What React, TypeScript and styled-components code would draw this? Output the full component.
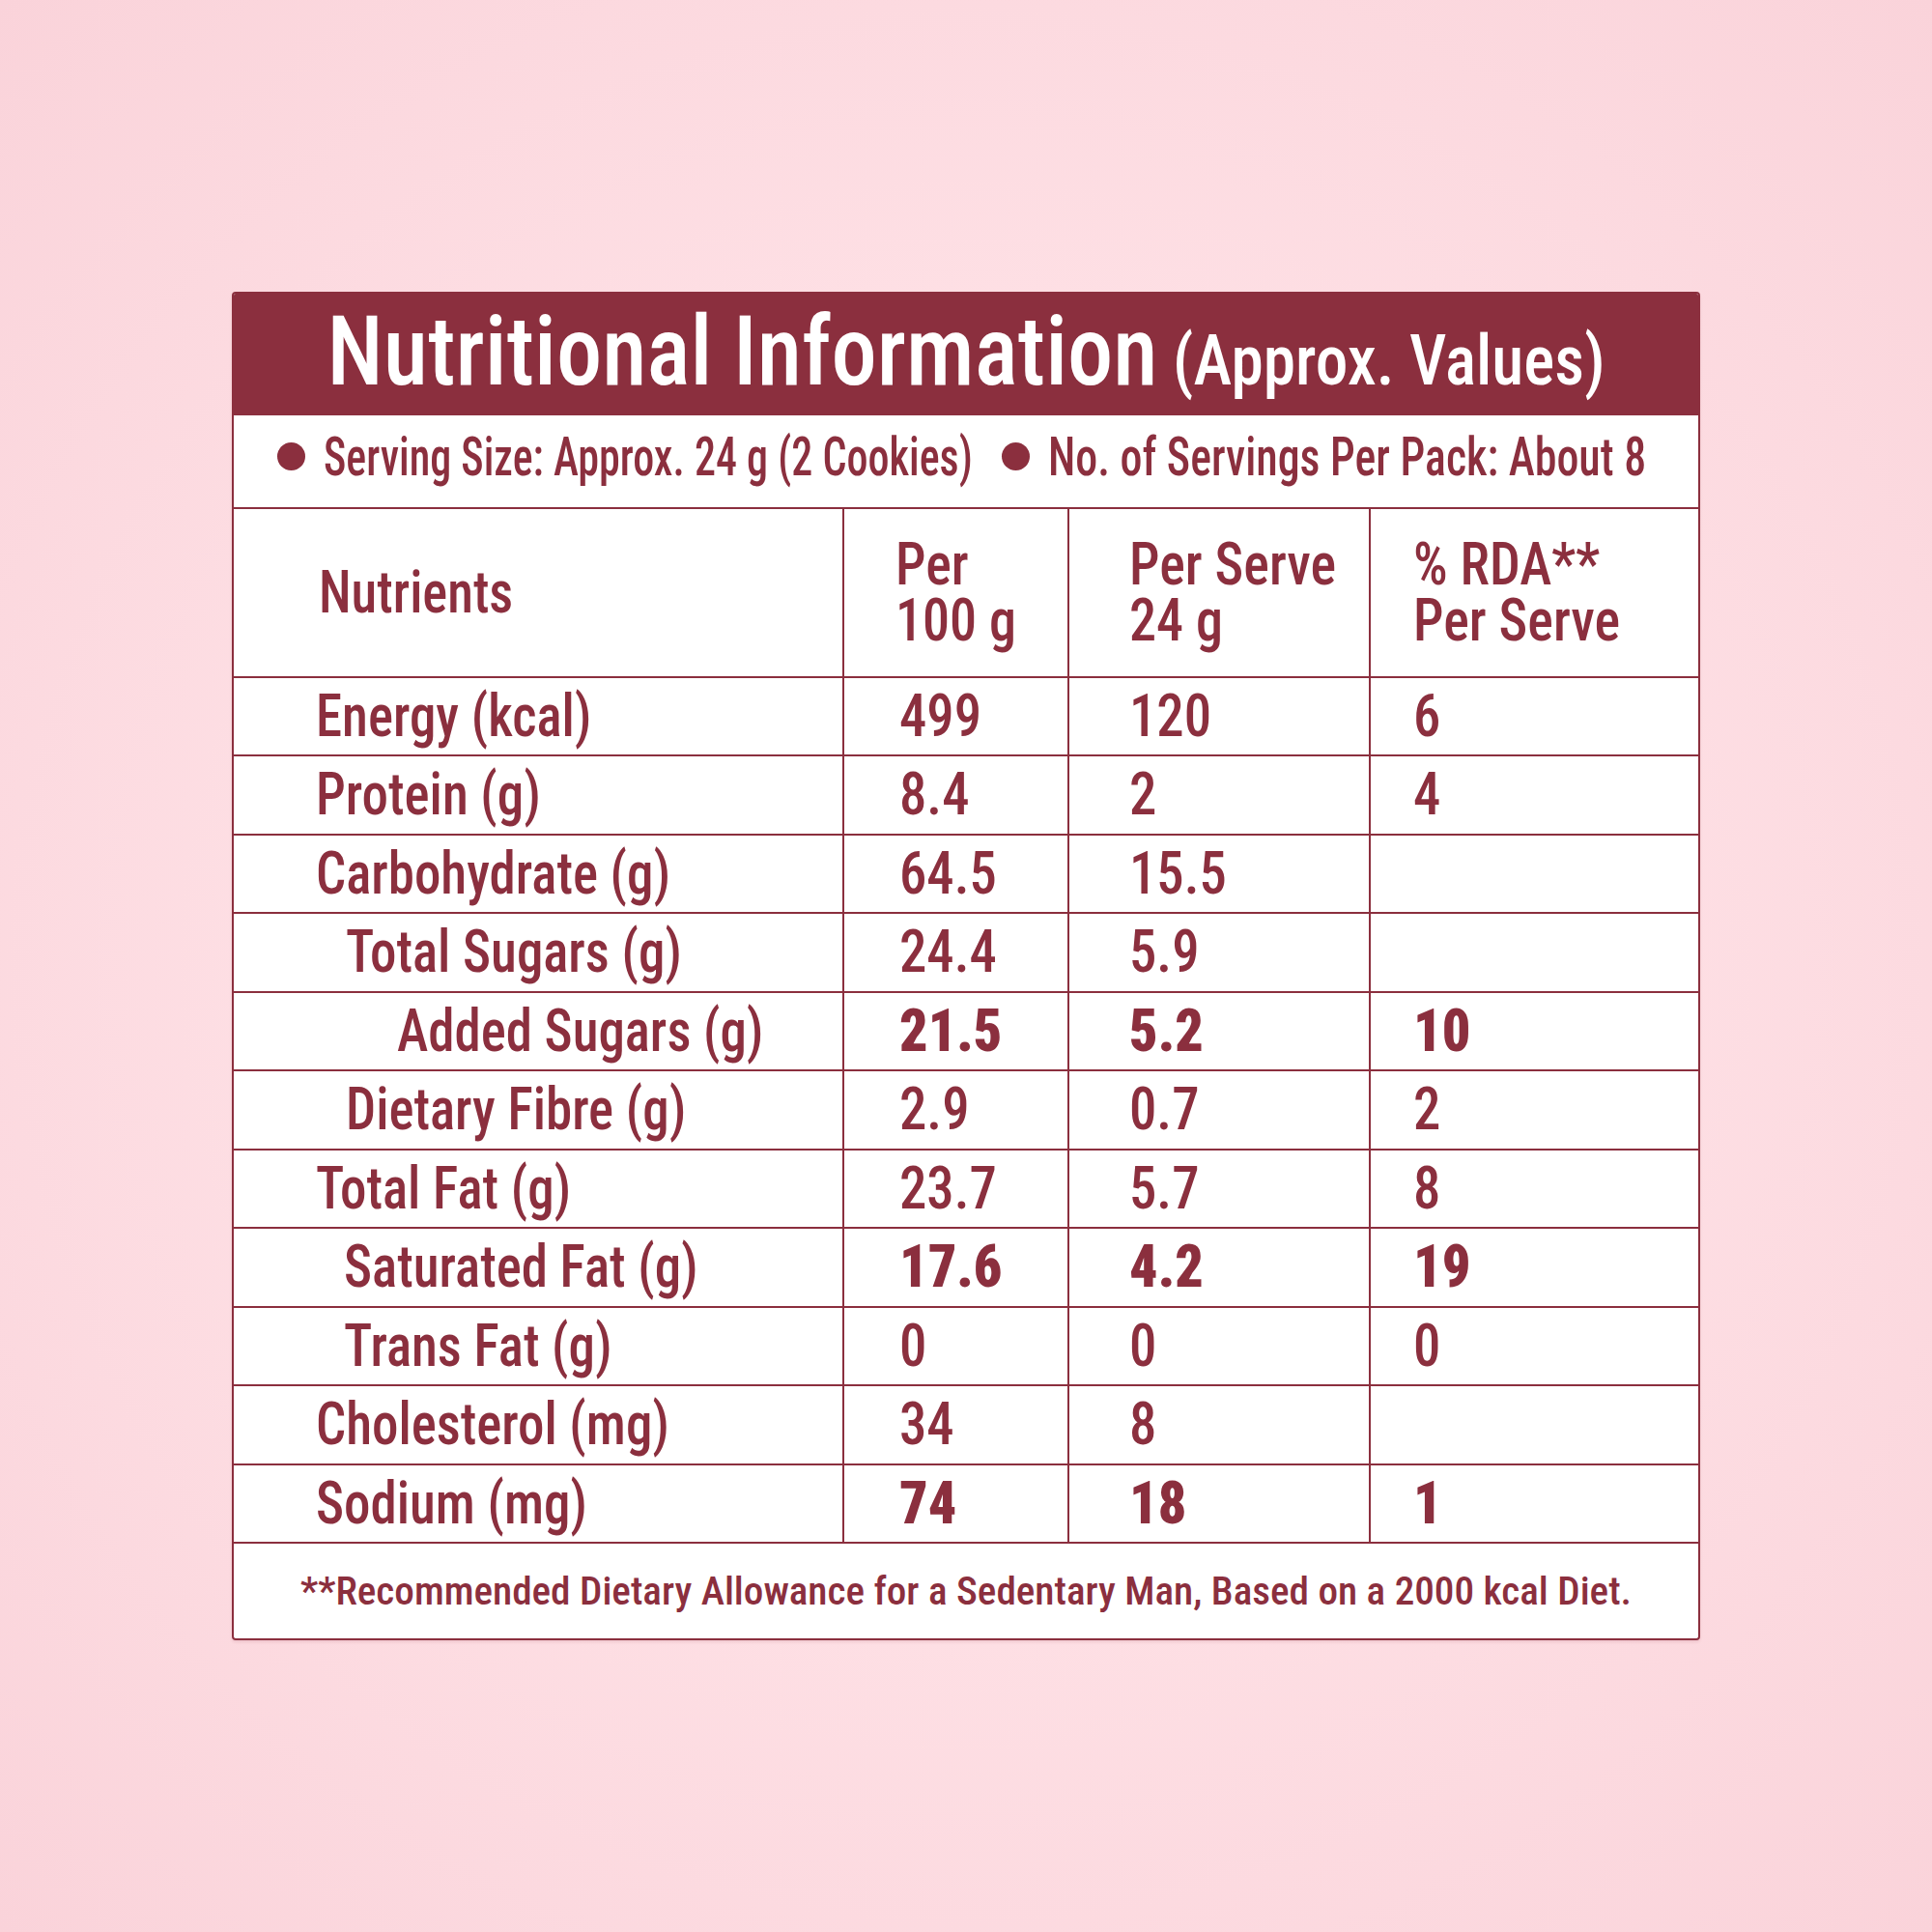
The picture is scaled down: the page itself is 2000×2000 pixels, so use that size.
import styled, { createGlobalStyle } from 'styled-components';

const MAROON = '#8b2f3e';

const GlobalStyle = createGlobalStyle`
  html, body {
    margin: 0;
    padding: 0;
  }
  body {
    font-family: Roboto, 'Liberation Sans', Arial, sans-serif;
    font-stretch: 75%;
    font-weight: 500;
    color: ${MAROON};
  }
`;

// --- Styled components ---
const Page = styled.div`
  width: 2000px;
  height: 2000px;
  display: flex;
  align-items: center;
  justify-content: center;
  background: radial-gradient(
    circle at 50% 50%,
    #ffe6ea 0%,
    #fee0e5 45%,
    #fad3da 100%
  );
`;

const Card = styled.div`
  box-sizing: border-box;
  width: 1520px;
  border: 2px solid ${MAROON};
  border-radius: 4px;
  background: #fff;
  overflow: hidden;
  box-shadow: 0 2px 3px rgba(139, 47, 62, 0.12);
`;

const Squeeze = styled.span<{ $sx: number; $origin?: string }>`
  display: inline-block;
  transform: scaleX(${(p) => p.$sx});
  transform-origin: ${(p) => p.$origin ?? 'left'} center;
  white-space: nowrap;
`;

const Header = styled.div`
  height: 126px;
  background: ${MAROON};
  color: #fff;
  display: flex;
  align-items: center;
  justify-content: center;
`;

const Title = styled.h1`
  margin: 0;
  font-weight: 500;
  font-size: 101px;
  line-height: 1;
  padding-bottom: 6px;
`;

const TitleNote = styled.span`
  font-size: 72px;
`;

const ServingRow = styled.div`
  box-sizing: border-box;
  height: 95px;
  display: flex;
  align-items: center;
  padding: 0 0 9px 45px;
  font-size: 56px;
`;

const ServingItem = styled.div<{ $width?: number }>`
  display: flex;
  align-items: center;
  gap: 19px;
  width: ${(p) => (p.$width ? `${p.$width}px` : 'auto')};
  flex: none;
`;

const Bullet = styled.span`
  width: 29px;
  height: 29px;
  border-radius: 50%;
  background: ${MAROON};
  flex: none;
`;

const Row = styled.div<{ $height: number }>`
  display: grid;
  grid-template-columns: 630px 233px 312px 341px;
  height: ${(p) => p.$height}px;
  border-top: 2px solid ${MAROON};
  box-sizing: border-box;
`;

const colPad = [85, 57, 62, 44];

const Cell = styled.div<{ $col: number; $indent?: number; $bold?: boolean }>`
  box-sizing: border-box;
  display: flex;
  align-items: center;
  padding-left: ${(p) => colPad[p.$col] + (p.$indent ?? 0)}px;
  border-left: ${(p) => (p.$col === 0 ? 'none' : `2px solid ${MAROON}`)};
  font-size: 61px;
  font-weight: ${(p) => (p.$bold ? 900 : 500)};
  line-height: 1.1;
`;

const HeadCell = styled(Cell)`
  line-height: 58px;
`;

const Footer = styled.div`
  height: 100px;
  border-top: 2px solid ${MAROON};
  box-sizing: border-box;
  display: flex;
  align-items: center;
  justify-content: center;
  font-size: 40px;
`;

type Nutrient = {
  name: string;
  indent: number;
  values: [string, string, string];
  bold?: boolean;
};

const nutrients: Nutrient[] = [
  { name: 'Energy (kcal)', indent: 0, values: ['499', '120', '6'] },
  { name: 'Protein (g)', indent: 0, values: ['8.4', '2', '4'] },
  { name: 'Carbohydrate (g)', indent: 0, values: ['64.5', '15.5', ''] },
  { name: 'Total Sugars (g)', indent: 31, values: ['24.4', '5.9', ''] },
  { name: 'Added Sugars (g)', indent: 84, values: ['21.5', '5.2', '10'], bold: true },
  { name: 'Dietary Fibre (g)', indent: 31, values: ['2.9', '0.7', '2'] },
  { name: 'Total Fat (g)', indent: 0, values: ['23.7', '5.7', '8'] },
  { name: 'Saturated Fat (g)', indent: 29, values: ['17.6', '4.2', '19'], bold: true },
  { name: 'Trans Fat (g)', indent: 29, values: ['0', '0', '0'] },
  { name: 'Cholesterol (mg)', indent: 0, values: ['34', '8', ''] },
  { name: 'Sodium (mg)', indent: 0, values: ['74', '18', '1'], bold: true },
];

const LABEL_SX = 0.9;
const HEAD_SX = 0.92;
const NUM_SX = 0.93;
const BOLD_SX = 0.95;

export default function App() {
  return (
    <>
      <GlobalStyle />
      <Page>
        <Card>
          <Header>
            <Title>
              <Squeeze $sx={0.937} $origin="center">
                Nutritional Information<TitleNote> (Approx. Values)</TitleNote>
              </Squeeze>
            </Title>
          </Header>

          <ServingRow>
            <ServingItem $width={750}>
              <Bullet />
              <Squeeze $sx={0.787}>Serving Size: Approx. 24 g (2 Cookies)</Squeeze>
            </ServingItem>
            <ServingItem>
              <Bullet />
              <Squeeze $sx={0.82}>No. of Servings Per Pack: About 8</Squeeze>
            </ServingItem>
          </ServingRow>

          <Row $height={175}>
            <HeadCell $col={0} $indent={3}>
              <Squeeze $sx={0.895}>Nutrients</Squeeze>
            </HeadCell>
            <HeadCell $col={1} $indent={-4}>
              <Squeeze $sx={HEAD_SX}>
                Per
                <br />
                100 g
              </Squeeze>
            </HeadCell>
            <HeadCell $col={2}>
              <Squeeze $sx={HEAD_SX}>
                Per Serve
                <br />
                24 g
              </Squeeze>
            </HeadCell>
            <HeadCell $col={3}>
              <Squeeze $sx={HEAD_SX}>
                % RDA**
                <br />
                Per Serve
              </Squeeze>
            </HeadCell>
          </Row>

          {nutrients.map((n) => (
            <Row key={n.name} $height={81.5}>
              <Cell $col={0} $indent={n.indent}>
                <Squeeze $sx={LABEL_SX}>{n.name}</Squeeze>
              </Cell>
              {n.values.map((v, i) => (
                <Cell key={i} $col={i + 1} $bold={n.bold}>
                  <Squeeze $sx={n.bold ? BOLD_SX : NUM_SX}>{v}</Squeeze>
                </Cell>
              ))}
            </Row>
          ))}

          <Footer>
            <Squeeze $sx={1.03} $origin="center">
              **Recommended Dietary Allowance for a Sedentary Man, Based on a 2000 kcal Diet.
            </Squeeze>
          </Footer>
        </Card>
      </Page>
    </>
  );
}
